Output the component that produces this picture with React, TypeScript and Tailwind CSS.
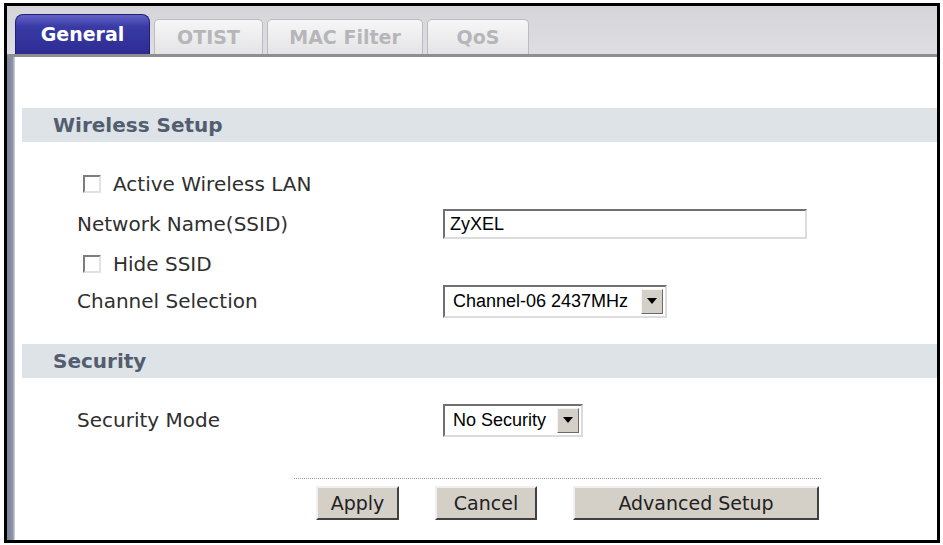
import { ReactNode } from 'react'

const LABEL = "font-['DejaVu_Sans',sans-serif] text-[20px] text-[#2f2f2f] leading-none"
const FIELD = "font-['Liberation_Sans',Arial,sans-serif] text-[18px] text-black leading-none"

function Tab({ label, active, width }: { label: string; active?: boolean; width: string }) {
  if (active) {
    return (
      <div
        className={`${width} h-[40px] flex items-center justify-center rounded-t-[8px] border border-b-0 border-[#20207a] bg-[linear-gradient(#6262c8,#3a3aa6_30%,#2c2c92)] font-['DejaVu_Sans',sans-serif] font-bold text-[19px] text-white`}
      >
        {label}
      </div>
    )
  }
  return (
    <div
      className={`${width} h-[35px] flex items-center justify-center rounded-t-[5px] border border-b-0 border-[#bcbcc0] bg-[linear-gradient(#f6f6f7,#e4e4e6)] font-['DejaVu_Sans',sans-serif] font-bold text-[19px] text-[#b6b6ba]`}
    >
      {label}
    </div>
  )
}

function SectionHeader({ children }: { children: ReactNode }) {
  return (
    <div className="ml-[7px] h-[34px] flex items-center pl-[31px] bg-[#dde3e6] font-['DejaVu_Sans',sans-serif] font-bold text-[20px] text-[#535d70]">
      {children}
    </div>
  )
}

function Checkbox({ label }: { label: string }) {
  return (
    <div className="flex items-center pl-[68px] gap-[12px]">
      <span className="w-[18px] h-[18px] bg-white border-2 border-t-[#7d7d7d] border-l-[#7d7d7d] border-b-[#e2e2e2] border-r-[#e2e2e2]" />
      <span className={LABEL}>{label}</span>
    </div>
  )
}

function SelectBox({ value, width }: { value: string; width: string }) {
  return (
    <div
      className={`${width} h-[33px] flex items-center justify-between bg-white border-2 border-t-[#707070] border-l-[#707070] border-b-[#dcdcdc] border-r-[#dcdcdc] pl-[8px] pr-[2px]`}
    >
      <span className={FIELD}>{value}</span>
      <span className="w-[22px] h-[25px] flex items-center justify-center bg-[#d4d0c8] border border-t-[#f4f4f4] border-l-[#f4f4f4] border-b-[#6a6a6a] border-r-[#6a6a6a]">
        <svg width="10" height="6" viewBox="0 0 10 6">
          <path d="M0 0 H10 L5 6 Z" fill="#000" />
        </svg>
      </span>
    </div>
  )
}

function Button({ label, width }: { label: string; width: string }) {
  return (
    <div
      className={`${width} h-[34px] flex items-center justify-center bg-[#d4d0c8] border-2 border-t-[#f0f0f0] border-l-[#f0f0f0] border-b-[#404040] border-r-[#404040] font-['DejaVu_Sans',sans-serif] text-[19px] text-[#222]`}
    >
      {label}
    </div>
  )
}

export default function App() {
  return (
    <div className="w-[943px] h-[545px] bg-white pt-[3px] pl-[4px]">
      <div className="w-[936px] h-[540px] border-[3px] border-black flex flex-col overflow-hidden">
        {/* tab bar */}
        <div className="h-[51px] shrink-0 flex items-end gap-[4px] pl-[8px] bg-[linear-gradient(#d6d6da,#dedee2)] border-b-[3px] border-[#8e8e92]">
          <Tab label="General" active width="w-[135px]" />
          <Tab label="OTIST" width="w-[109px]" />
          <Tab label="MAC Filter" width="w-[156px]" />
          <Tab label="QoS" width="w-[102px]" />
        </div>

        <div className="flex flex-1">
          {/* left stripe */}
          <div className="w-[8px] shrink-0 bg-[linear-gradient(90deg,#7c8398,#8d93a6_70%,#d8dae0)]" />

          <div className="flex-1 flex flex-col pt-[51px]">
            <SectionHeader>Wireless Setup</SectionHeader>

            <div className="flex flex-col pt-[22px]">
              <div className="h-[40px] flex items-center">
                <Checkbox label="Active Wireless LAN" />
              </div>
              <div className="h-[40px] flex items-center">
                <span className={`${LABEL} w-[428px] pl-[62px]`}>Network Name(SSID)</span>
                <div className="w-[364px] h-[30px] flex items-center pl-[5px] bg-white border-2 border-t-[#707070] border-l-[#707070] border-b-[#dcdcdc] border-r-[#dcdcdc]">
                  <span className={FIELD}>ZyXEL</span>
                </div>
              </div>
              <div className="h-[40px] flex items-center">
                <Checkbox label="Hide SSID" />
              </div>
              <div className="h-[34px] flex items-center">
                <span className={`${LABEL} w-[428px] pl-[62px]`}>Channel Selection</span>
                <SelectBox value="Channel-06 2437MHz" width="w-[224px]" />
              </div>
            </div>

            <div className="mt-[26px]">
              <SectionHeader>Security</SectionHeader>
            </div>

            <div className="mt-[24px] h-[36px] flex items-center">
              <span className={`${LABEL} w-[428px] pl-[62px]`}>Security Mode</span>
              <SelectBox value="No Security" width="w-[140px]" />
            </div>

            <div className="ml-[279px] mt-[40px] w-[527px] border-t border-dotted border-[#9a9a9a]">
              <div className="flex gap-[36px] pl-[22px] pt-[7px]">
                <Button label="Apply" width="w-[83px]" />
                <Button label="Cancel" width="w-[102px]" />
                <Button label="Advanced Setup" width="w-[246px]" />
              </div>
            </div>
          </div>
        </div>
      </div>
    </div>
  )
}
